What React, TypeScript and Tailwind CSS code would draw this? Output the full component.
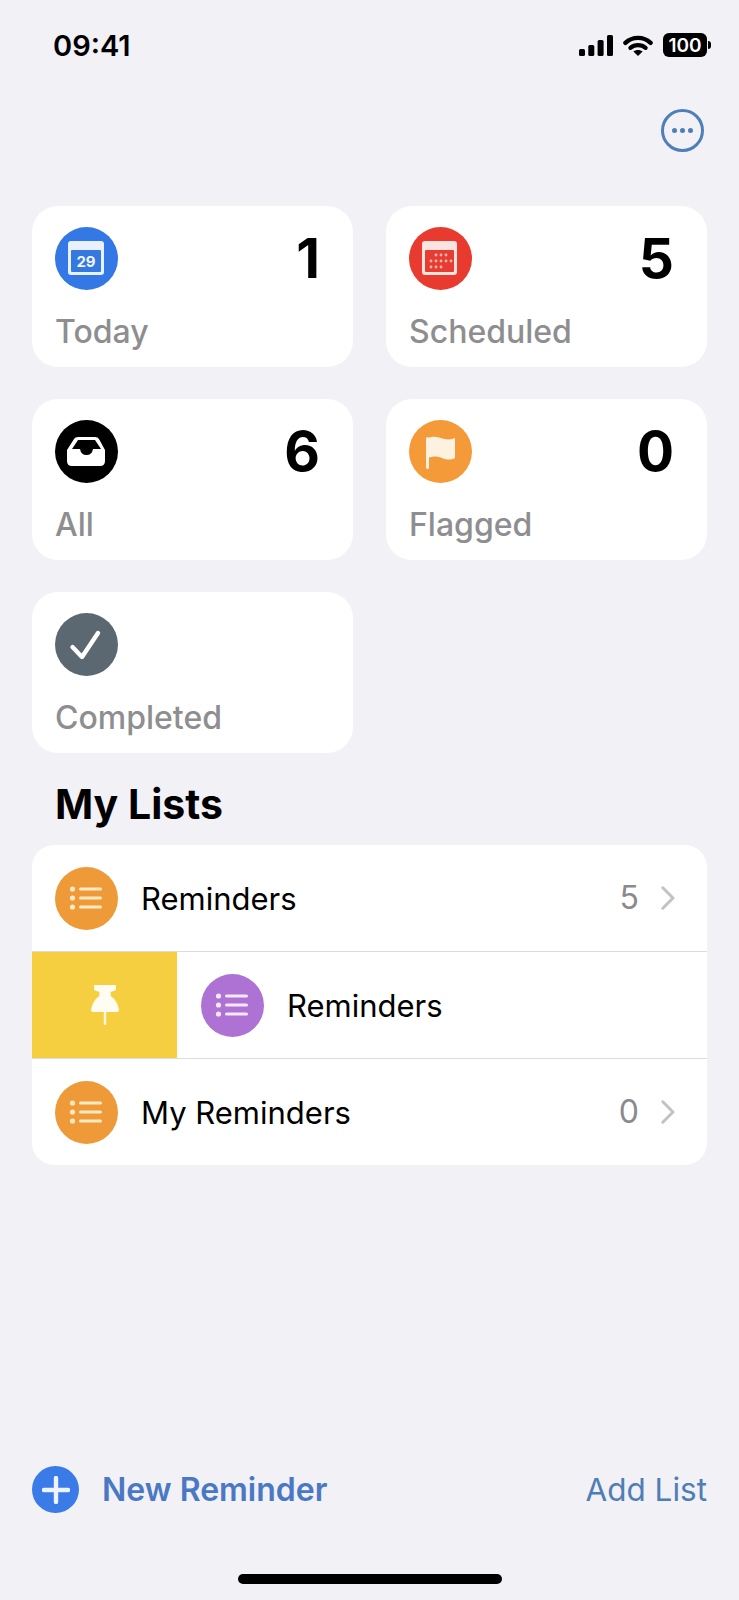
const font = { fontFamily: "Inter, 'Noto Sans', sans-serif" };

const CalendarToday = () => (
  <svg viewBox="0 0 63 63" className="h-full w-full">
    <rect x="13" y="14" width="36" height="34" rx="3" fill="#e8f1fd" />
    <rect x="16" y="23" width="30" height="22" rx="1" fill="#3478e0" />
    <text x="31" y="39.5" textAnchor="middle" fontSize="15" fontWeight="700" fill="#eef5ff" fontFamily="Inter, sans-serif">
      29
    </text>
  </svg>
);

const CalendarDots = () => {
  const dots = [
    [27, 28],
    [32, 28],
    [37, 28],
    [22, 34],
    [27, 34],
    [32, 34],
    [37, 34],
    [42, 34],
    [22, 40],
    [27, 40],
    [32, 40],
  ];
  return (
    <svg viewBox="0 0 63 63" className="h-full w-full">
      <rect x="13" y="14" width="35" height="34" rx="3" fill="#fbe3df" />
      <rect x="16" y="23" width="29" height="22" rx="1" fill="#e63c31" />
      {dots.map(([x, y]) => (
        <circle key={`${x}-${y}`} cx={x} cy={y} r="1.4" fill="#f9b9b2" />
      ))}
    </svg>
  );
};

const Inbox = () => (
  <svg viewBox="0 0 63 63" className="h-full w-full">
    <path d="M12 30 L19 19 Q20 17 23 17 H40 Q43 17 44 19 L50 30 V41 Q50 46 45 46 H17 Q12 46 12 41 Z" fill="#fff" />
    <path d="M17 29 L23 20 H40 L46 29 H38 Q37 35 31.5 35 Q26 35 25 29 Z" fill="#000" />
  </svg>
);

const Flag = () => (
  <svg viewBox="0 0 63 63" className="h-full w-full">
    <rect x="17" y="17" width="3" height="32" rx="1.5" fill="#fdf1df" />
    <path d="M19 18 C26 15 31 18 36 19 C40 20 43 19 46 18 V38 C42 40 38 40 33 38 C28 36 24 36 19 38 Z" fill="#fdf1df" />
  </svg>
);

const Check = () => (
  <svg viewBox="0 0 63 63" className="h-full w-full">
    <path d="M17.5 34 L27 44 L43 20" fill="none" stroke="#fff" strokeWidth="4.4" strokeLinecap="round" strokeLinejoin="round" />
  </svg>
);

const ListGlyph = ({ tint }: { tint: string }) => (
  <svg viewBox="0 0 63 63" className="h-full w-full">
    {[22, 31, 40].map((y) => (
      <g key={y}>
        <circle cx="17.5" cy={y} r="2.6" fill={tint} />
        <rect x="24" y={y - 1.6} width="23" height="3.2" rx="1.6" fill={tint} />
      </g>
    ))}
  </svg>
);

const Pin = () => (
  <svg viewBox="0 0 28 40" className="h-[40px] w-[28px]">
    <path
      d="M3 0.6 Q3 0 3.6 0 H24.4 Q25 0 25 0.6 V4 Q25 5 24 5.4 L19.5 7 L19.8 11 Q26.5 16 28 24.5 Q28 27 26 27 H2 Q0 27 0 24.5 Q1.5 16 8.2 11 L8.5 7 L4 5.4 Q3 5 3 4 Z"
      fill="#fffdf2"
    />
    <rect x="12.8" y="26" width="2.4" height="14" rx="1" fill="#fff8dc" />
  </svg>
);

const Chevron = () => (
  <svg viewBox="0 0 14 24" className="h-[24px] w-[14px]">
    <path d="M1.8 1.8 L12 12 L1.8 22.2" fill="none" stroke="#c2c2c6" strokeWidth="3" strokeLinecap="round" strokeLinejoin="round" />
  </svg>
);

const Signal = () => (
  <svg viewBox="0 0 34 21" className="h-[21px] w-[34px]">
    <rect x="0" y="14" width="6" height="7" rx="1.6" fill="#000" />
    <rect x="9.3" y="10" width="6" height="11" rx="1.6" fill="#000" />
    <rect x="18.6" y="5" width="6" height="16" rx="1.6" fill="#000" />
    <rect x="28" y="0" width="6" height="21" rx="1.6" fill="#000" />
  </svg>
);

const Wifi = () => (
  <svg viewBox="0 0 30 21" className="h-[21px] w-[30px]">
    <path d="M2.4 7.8 C9.5 1.2 20.5 1.2 27.6 7.8" fill="none" stroke="#000" strokeWidth="4.4" strokeLinecap="round" />
    <path d="M7.4 12.8 C11.8 9.2 18.2 9.2 22.6 12.8" fill="none" stroke="#000" strokeWidth="4.2" strokeLinecap="round" />
    <path d="M10.4 16.6 C13.2 14.6 16.8 14.6 19.6 16.6 L15 21 Z" fill="#000" />
  </svg>
);

const Battery = () => (
  <div className="flex items-center">
    <div className="flex h-[24px] w-[44px] items-center justify-center rounded-[6px] bg-black text-[19px] leading-none font-semibold text-white">
      100
    </div>
    <div className="ml-[1px] h-[8px] w-[3px] rounded-r-full bg-black" />
  </div>
);

type Tile = { label: string; count?: number; color: string; icon: React.ReactNode };

const tiles: Tile[] = [
  { label: "Today", count: 1, color: "bg-[#3478e6]", icon: <CalendarToday /> },
  { label: "Scheduled", count: 5, color: "bg-[#e93a30]", icon: <CalendarDots /> },
  { label: "All", count: 6, color: "bg-black", icon: <Inbox /> },
  { label: "Flagged", count: 0, color: "bg-[#f49a38]", icon: <Flag /> },
  { label: "Completed", color: "bg-[#5b6872]", icon: <Check /> },
];

const TileCard = ({ label, count, color, icon }: Tile) => (
  <div className="flex h-[161px] flex-col rounded-[26px] bg-white pt-[21px] pr-[33px] pl-[23px]">
    <div className="flex h-[63px] items-start justify-between">
      <div className={`h-[63px] w-[63px] rounded-full ${color}`}>{icon}</div>
      {count !== undefined && (
        <span className="mt-[4px] text-[55px] leading-[55px] font-bold text-black">{count}</span>
      )}
    </div>
    <div className="mt-[22px] text-[32px] leading-[40px] font-[550] text-[#8e8e90]">{label}</div>
  </div>
);

const ListRow = ({ name, count, color, tint }: { name: string; count: number; color: string; tint: string }) => (
  <div className="flex h-[106px] items-center pr-[32px] pl-[23px]">
    <div className={`h-[63px] w-[63px] rounded-full ${color}`}>
      <ListGlyph tint={tint} />
    </div>
    <span className="mt-[2px] ml-[23px] flex-1 text-[31px] leading-[40px] text-black">{name}</span>
    <span className="text-[32px] leading-[40px] text-[#8a8a8e]">{count}</span>
    <div className="ml-[22px]">
      <Chevron />
    </div>
  </div>
);

export default function App() {
  return (
    <div className="flex h-[1600px] w-[739px] flex-col overflow-hidden bg-[#f1f1f6]" style={font}>
      <div className="flex h-[90px] items-center justify-between pr-[28px] pl-[53px]">
        <span className="text-[29px] leading-none font-semibold text-black">09:41</span>
        <div className="flex items-center">
          <Signal />
          <div className="ml-[10px]">
            <Wifi />
          </div>
          <div className="ml-[10px]">
            <Battery />
          </div>
        </div>
      </div>

      <div className="mt-[19px] flex justify-end pr-[35px]">
        <div className="flex h-[43px] w-[43px] items-center justify-center gap-[3px] rounded-full border-[3px] border-[#4f7fb8]">
          <div className="h-[5px] w-[5px] rounded-full bg-[#4f7fb8]" />
          <div className="h-[5px] w-[5px] rounded-full bg-[#4f7fb8]" />
          <div className="h-[5px] w-[5px] rounded-full bg-[#4f7fb8]" />
        </div>
      </div>

      <div className="mx-[32px] mt-[54px] grid grid-cols-2 gap-x-[33px] gap-y-[32px]">
        {tiles.map((t) => (
          <TileCard key={t.label} {...t} />
        ))}
      </div>

      <div className="flex h-[92px] items-center pt-[10px] pl-[55px] text-[41px] leading-none font-bold text-black">
        My Lists
      </div>

      <div className="mx-[32px] overflow-hidden rounded-[22px] bg-white">
        <ListRow name="Reminders" count={5} color="bg-[#ef9a39]" tint="#ffe9c4" />
        <div className="flex h-[108px] border-y border-[#dcdcde]">
          <div className="flex w-[145px] items-center justify-center bg-[#f5cf3f]">
            <Pin />
          </div>
          <div className="flex items-center pl-[24px]">
            <div className="h-[63px] w-[63px] rounded-full bg-[#ad72d4]">
              <ListGlyph tint="#f8e8ff" />
            </div>
            <span className="mt-[2px] ml-[23px] text-[31px] leading-[40px] text-black">Reminders</span>
          </div>
        </div>
        <ListRow name="My Reminders" count={0} color="bg-[#ef9a39]" tint="#ffe9c4" />
      </div>

      <div className="mt-auto flex h-[47px] items-center justify-between px-[32px]">
        <div className="flex items-center">
          <div className="flex h-[47px] w-[47px] items-center justify-center rounded-full bg-[#3a7be8]">
            <svg viewBox="0 0 28 28" className="h-[28px] w-[28px]">
              <path d="M14 2 V26 M2 14 H26" stroke="#eef4ff" strokeWidth="4.4" strokeLinecap="round" />
            </svg>
          </div>
          <span className="ml-[23px] text-[32px] leading-[40px] font-semibold text-[#4a78c4]">New Reminder</span>
        </div>
        <span className="text-[31.5px] leading-[40px] text-[#4f7db5]">Add List</span>
      </div>

      <div className="mt-[61px] mb-[16px] h-[10px] w-[264px] self-center rounded-full bg-black" />
    </div>
  );
}
